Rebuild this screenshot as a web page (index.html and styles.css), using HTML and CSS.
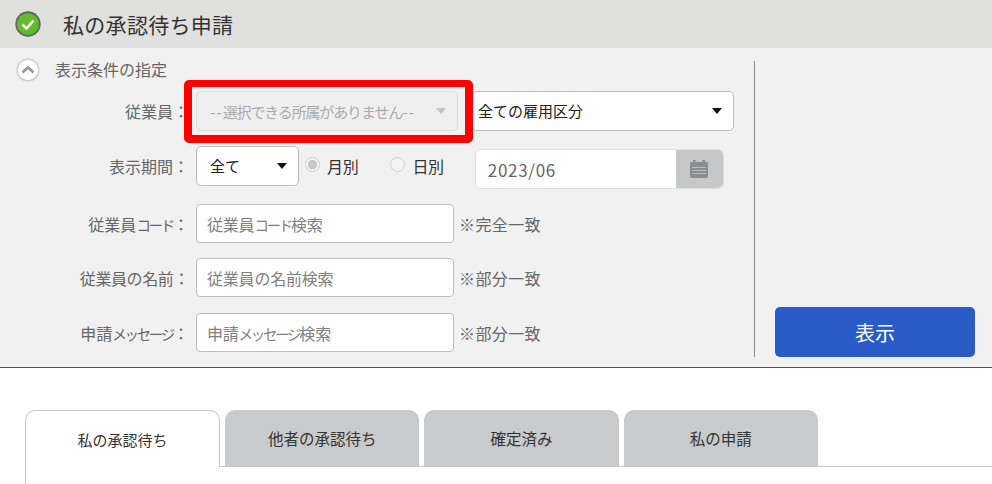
FILE: index.html
```html
<!DOCTYPE html>
<html lang="ja">
<head>
<meta charset="utf-8">
<title>私の承認待ち申請</title>
<link rel="stylesheet" href="styles.css">
</head>
<body>
<header class="page-head">
  <svg class="ok-icon" viewBox="0 0 26 26" width="26" height="26">
    <circle cx="13" cy="13" r="12.7" fill="#5f6a5c"/>
    <circle cx="13" cy="13" r="10.8" fill="#62bb2e"/>
    <path d="M7.5 13.500l4 4 7-8" fill="none" stroke="#f4fbe9" stroke-width="2.600"/>
  </svg>
  <h1 class="page-title">私の承認待ち申請</h1>
</header>
<section class="filter">
  <div class="filter-main">
    <div class="filter-title">
      <svg class="toggle" viewBox="0 0 24 24" width="24" height="24">
        <circle cx="12" cy="12" r="10.800" fill="#fff" stroke="#cfcfcf" stroke-width="1.500"/>
        <path d="M6.500 14.500l5.500-5 5.500 5" fill="none" stroke="#9a9a9a" stroke-width="2.800"/>
      </svg>
      <span class="filter-title-text">表示条件の指定</span>
    </div>
    <div class="row row-emp">
      <label class="lbl">従業員：</label>
      <div class="select select-disabled"><span class="dash">--</span><span class="tight">選択できる所属がありません</span><span class="dash">--</span><i class="caret"></i></div>
      <div class="select select-type">全ての雇用区分<i class="caret"></i></div>
      <div class="highlight"></div>
    </div>
    <div class="row row-period">
      <label class="lbl">表示期間：</label>
      <div class="select select-period">全て<i class="caret"></i></div>
      <span class="radio-item radio-month"><i class="radio radio-on"></i>月別</span>
      <span class="radio-item radio-day"><i class="radio"></i>日別</span>
      <div class="date">
        <span class="date-value">2023/06</span>
        <span class="date-btn">
          <svg viewBox="0 0 18 18" width="18" height="18">
            <path d="M3 0h2.500v2h7V0H15v2h1a2 2 0 0 1 2 2v12a2 2 0 0 1-2 2H2a2 2 0 0 1-2-2V4a2 2 0 0 1 2-2h1z" fill="#8a8c8d"/>
            <path d="M2 7.500h14M2 10.500h14M2 13.500h14" stroke="#bcbdbe" stroke-width="1.200"/>
          </svg>
        </span>
      </div>
    </div>
    <div class="row row-text">
      <label class="lbl">従業員<span class="kana">コード</span>：</label>
      <div class="input">従業員<span class="kana">コード</span>検索</div>
      <span class="note">※完全一致</span>
    </div>
    <div class="row row-text">
      <label class="lbl lbl-tight">従業員の名前：</label>
      <div class="input">従業員の名前検索</div>
      <span class="note">※部分一致</span>
    </div>
    <div class="row row-text">
      <label class="lbl">申請<span class="kana">メッセージ</span>：</label>
      <div class="input">申請<span class="kana">メッセージ</span>検索</div>
      <span class="note">※部分一致</span>
    </div>
  </div>
  <div class="filter-side">
    <button class="show-btn">表示</button>
  </div>
</section>
<nav class="tabs">
  <a class="tab tab-active">私の承認待ち</a>
  <a class="tab">他者の承認待ち</a>
  <a class="tab">確定済み</a>
  <a class="tab">私の申請</a>
</nav>
<div class="tab-body"></div>
</body>
</html>
```
FILE: styles.css
```css
* { box-sizing: border-box; }
html, body { margin: 0; padding: 0; background: #fff; overflow: hidden; }
body {
  width: 992px;
  height: 484px;
  font-family: "Noto Sans CJK JP", "Noto Sans", sans-serif;
  font-size: 16px;
  color: #333;
}
.page-head {
  height: 48px;
  background: #e0e0de;
  display: flex;
  align-items: center;
  padding-left: 15px;
}
.ok-icon { flex: none; }
.page-title {
  margin: 0 0 0 22px;
  font-size: 21px;
  font-weight: 400;
  line-height: 1;
  letter-spacing: 0.3px;
  color: #333;
}
.filter {
  height: 320px;
  background: #f1f1f1;
  border-bottom: 1px solid #2f58a8;
  display: flex;
  padding-top: 13px;
}
.filter-main {
  width: 755px;
  height: 296px;
  border-right: 1px solid #8a8a8a;
  flex: none;
}
.filter-title {
  height: 20px;
  display: flex;
  align-items: center;
  padding-left: 16px;
  color: #666;
  gap: 15px;
  margin-top: -1px;
}
.filter-title-text { position: relative; top: -1px; }
.toggle { flex: none; }
.row { display: flex; align-items: center; position: relative; }
.row-emp { margin-top: 11px; height: 40px; }
.row-period { margin-top: 15px; height: 40px; }
.row-text { margin-top: 15px; height: 39px; }
.row-period + .row-text { margin-top: 18px; }
.row-text:last-child { margin-top: 16px; }
.lbl {
  width: 196px;
  flex: none;
  text-align: right;
  padding-right: 7px;
  color: #666;
  white-space: nowrap;
}
.lbl-tight { letter-spacing: -0.4px; }
.kana { font-size: 14.500px; letter-spacing: -2.300px; }
.dash { letter-spacing: 0.800px; }
.tight { font-size: 15px; letter-spacing: -1.150px; }
.select {
  position: relative;
  height: 40px;
  line-height: 38px;
  border: 1px solid #bdbdbd;
  border-radius: 5px;
  background: #fff;
  color: #222;
  flex: none;
  font-size: 15px;
  white-space: nowrap;
}
.caret {
  position: absolute;
  right: 11px;
  top: 16px;
  border-left: 5px solid transparent;
  border-right: 5px solid transparent;
  border-top: 6px solid #111;
}
.select-disabled {
  width: 262px;
  padding-left: 13px;
  background: #efefef;
  border-color: #dcdcdc;
  color: #aaa;
  font-size: 16px;
}
.select-disabled .caret { border-top-color: #c4c4c4; right: 11px; }
.select-type { width: 262px; margin-left: 14px; padding-left: 5px; }
.select-period { width: 103px; padding-left: 13px; }
.highlight {
  position: absolute;
  left: 184px;
  top: -11px;
  width: 289px;
  height: 63px;
  border: 8px solid #f00;
  border-top-width: 7px;
  border-radius: 5px;
  pointer-events: none;
}
.radio-item {
  display: inline-flex;
  align-items: center;
  gap: 7px;
  color: #333;
  white-space: nowrap;
  letter-spacing: -0.3px;
}
.radio-month { margin-left: 6px; }
.radio-day { margin-left: 32px; }
.radio {
  display: inline-block;
  width: 15px;
  height: 15px;
  border: 1px solid #cfcfcf;
  border-radius: 50%;
  background: #f4f4f4;
  position: relative;
  top: -2px;
}
.radio-on { background: radial-gradient(circle, #c8c8c8 0 4.500px, #f4f4f4 5px); }
.date {
  margin-left: 31px;
  width: 249px;
  height: 40px;
  display: flex;
  border: 1px solid #dedede;
  border-radius: 6px;
  background: #fff;
  overflow: hidden;
  position: relative;
  top: 3px;
}
.date-value {
  flex: 1;
  padding-left: 12px;
  line-height: 40px;
  color: #666;
  font-size: 17px;
  letter-spacing: 0.7px;
}
.date-btn {
  width: 47px;
  background: #c6c7c8;
  display: flex;
  align-items: center;
  justify-content: center;
}
.input {
  width: 258px;
  height: 39px;
  line-height: 38px;
  padding-left: 10px;
  background: #fff;
  border: 1px solid #bdbdbd;
  border-radius: 4px;
  color: #808080;
  flex: none;
  letter-spacing: -0.2px;
}
.note { margin-left: 5px; color: #666; letter-spacing: 0.4px; }
.filter-side {
  flex: 1;
  display: flex;
  align-items: flex-end;
  padding-left: 20px;
  height: 296px;
}
.show-btn {
  width: 200px;
  height: 50px;
  border: 0;
  border-radius: 5px;
  background: #2a5cc8;
  color: #fff;
  font: inherit;
  font-size: 20px;
}
.tabs {
  display: flex;
  align-items: flex-end;
  gap: 5px;
  margin: 42px 0 0 25px;
  height: 57px;
  border-bottom: 1px solid #c9c9c9;
}
.tab {
  width: 194.300px;
  height: 56px;
  border-radius: 10px 10px 0 0;
  background: #c9cacc;
  color: #333;
  font-size: 15.500px;
  display: flex;
  align-items: center;
  justify-content: center;
}
.tab-active {
  width: 195px;
  height: 57px;
  margin-bottom: -1px;
  background: #fff;
  border: 1px solid #c9c9c9;
  border-bottom: 0;
  font-size: 15px;
}
.tab-body {
  margin-left: 25px;
  height: 20px;
  border-left: 1px solid #c9c9c9;
}
```
